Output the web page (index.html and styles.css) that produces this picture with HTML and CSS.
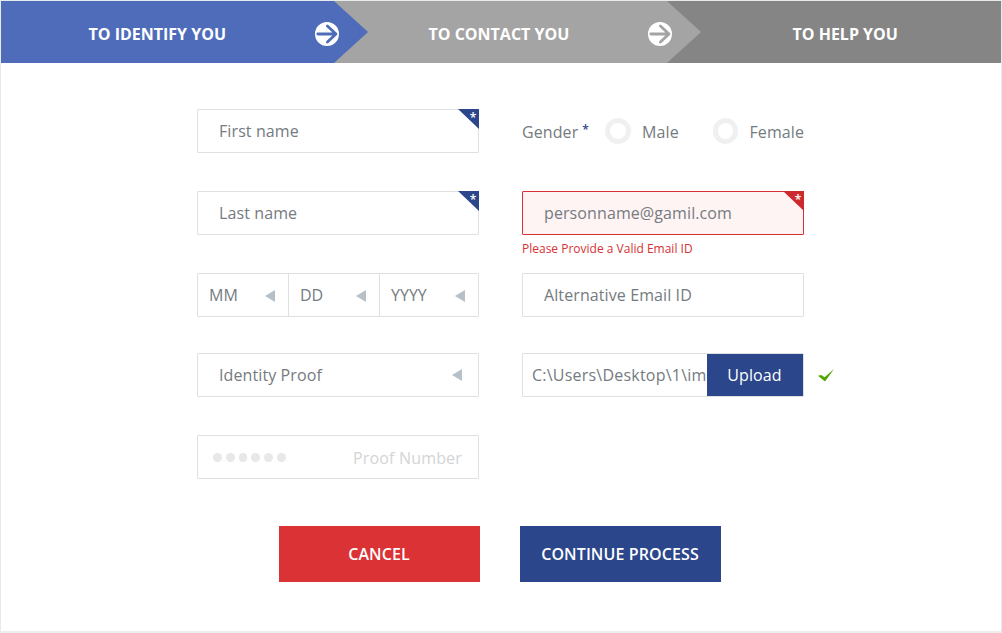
FILE: index.html
```html
<!DOCTYPE html>
<html lang="en">
<head>
<meta charset="utf-8">
<title>Registration</title>
<link rel="stylesheet" href="styles.css">
</head>
<body>
<main class="page">
  <nav class="steps">
    <div class="step step-identify"><span class="step-label">TO IDENTIFY YOU</span>
      <svg class="step-icon" viewBox="0 0 24 24"><circle cx="12" cy="12" r="12"/><path d="M2.8 12H20.5M12.4 4L21 12L12.4 20"/></svg>
    </div>
    <div class="step step-contact"><span class="step-label">TO CONTACT YOU</span>
      <svg class="step-icon" viewBox="0 0 24 24"><circle cx="12" cy="12" r="12"/><path d="M2.8 12H20.5M12.4 4L21 12L12.4 20"/></svg>
    </div>
    <div class="step step-help"><span class="step-label">TO HELP YOU</span></div>
  </nav>
  <form class="form">
    <div class="field"><span class="value">First name</span><span class="corner"><span class="star">*</span></span></div>
    <div class="gender">
      <span class="gender-label">Gender</span><span class="required">*</span>
      <span class="radio"></span><span class="male">Male</span>
      <span class="radio"></span><span class="female">Female</span>
    </div>
    <div class="field"><span class="value">Last name</span><span class="corner"><span class="star">*</span></span></div>
    <div class="cell">
      <div class="field invalid"><span class="value">personname@gamil.com</span><span class="corner"><span class="star">*</span></span></div>
      <div class="error">Please Provide a Valid Email ID</div>
    </div>
    <div class="field date">
      <div class="part"><span>MM</span><span class="caret"></span></div>
      <div class="part"><span>DD</span><span class="caret"></span></div>
      <div class="part year"><span>YYYY</span><span class="caret"></span></div>
    </div>
    <div class="field"><span class="value">Alternative Email ID</span></div>
    <div class="field select"><span class="value">Identity Proof</span><span class="caret"></span></div>
    <div class="upload-row">
      <div class="field upload"><span class="path">C:\Users\Desktop\1\ima</span><span class="upload-button">Upload</span></div>
      <svg class="check" viewBox="0 0 16 13"><path d="M0 6.8L3.2 5.9L6.6 8.3L16 0L7 12.6Z"/></svg>
    </div>
    <div class="field proof">
      <span class="dots"><i></i><i></i><i></i><i></i><i></i><i></i></span>
      <span class="proof-label">Proof Number</span>
    </div>
  </form>
  <div class="actions">
    <div class="button cancel">CANCEL</div>
    <div class="button continue">CONTINUE PROCESS</div>
  </div>
</main>
</body>
</html>
```
FILE: styles.css
```css
* { box-sizing: border-box; }
body {
  margin: 0;
  background: #fff;
  color: #757b80;
  font: 16px/22px "Open Sans", sans-serif;
  letter-spacing: 0.1px;
}
.page {
  height: 633px;
  border: 1px solid #e6eaec;
  border-bottom: 2px solid #ededed;
  overflow: hidden;
}
.steps {
  display: grid;
  grid-template-columns: 333px 333px 1fr;
  height: 62px;
}
.step {
  display: flex;
  align-items: center;
  justify-content: space-between;
  height: 62px;
  padding-top: 4px;
  color: #fff;
  font-weight: 700;
  letter-spacing: 0;
  white-space: nowrap;
}
.step-identify {
  z-index: 2;
  width: 367px;
  padding-left: 87.5px;
  padding-right: 29px;
  background: #4f6cba;
  clip-path: polygon(0 0, 333px 0, 100% 50%, 333px 100%, 0 100%);
}
.step-contact {
  z-index: 1;
  width: 367px;
  padding-left: 94.5px;
  padding-right: 29px;
  background: #a4a4a4;
  clip-path: polygon(0 0, 333px 0, 100% 50%, 333px 100%, 0 100%);
}
.step-help { padding-left: 125.5px; background: #858585; }
.step-icon { width: 24px; height: 24px; fill: #fff; stroke-width: 2.8; stroke-linecap: round; stroke-linejoin: round; }
.step-identify path { fill: none; stroke: #4f6cba; }
.step-contact path { fill: none; stroke: #a4a4a4; }
.form {
  display: grid;
  grid-template-columns: 282px 282px;
  grid-template-rows: 82px 82px 80px 82px 44px;
  column-gap: 43px;
  padding: 46px 0 0 196px;
}
.field {
  display: flex;
  position: relative;
  align-items: center;
  width: 282px;
  height: 44px;
  border: 1px solid #dfe0e1;
  border-radius: 1px;
}
.value { padding-left: 21px; }
.corner {
  position: absolute;
  top: -1px;
  right: -1px;
  width: 21px;
  height: 20px;
  background: #2b468b;
  clip-path: polygon(0 0, 100% 0, 100% 100%);
}
.star {
  position: absolute;
  top: 1px;
  right: 2.5px;
  color: #fff;
  font-size: 12px;
  font-weight: 600;
  line-height: 16px;
}
.invalid { border-color: #d93034; background: #fff4f4; }
.invalid .corner { background: #ce2a2e; }
.error { padding-top: 5px; color: #d93034; font-size: 12px; line-height: 17px; letter-spacing: 0; }
.gender { display: flex; align-items: center; height: 44px; padding-top: 1px; white-space: nowrap; }
.required { width: 27px; padding: 0 0 4px 4px; color: #2b468b; font-size: 12px; font-weight: 600; }
.radio { width: 26px; height: 26px; margin-top: -2px; border: 5px solid #f0f0f0; border-radius: 50%; }
.male { width: 71px; margin-left: 11px; }
.female { margin-left: 11px; }
.part {
  display: flex;
  align-items: center;
  justify-content: space-between;
  width: 91px;
  height: 42px;
  padding: 0 13px 0 11px;
  border-right: 1px solid #dfe0e1;
  letter-spacing: 0;
}
.year { width: 98px; border-right: 0; }
.caret {
  width: 10px;
  height: 12px;
  background: #b6c0c9;
  clip-path: polygon(0 50%, 100% 0, 100% 100%);
}
.part .caret { margin-top: 2px; }
.select { justify-content: space-between; padding-right: 16px; }
.upload-row { display: flex; align-items: center; height: 44px; width: 312px; }
.path {
  width: 184px;
  padding-left: 9px;
  overflow: hidden;
  white-space: nowrap;
  letter-spacing: 0.22px;
}
.upload-button { width: 96px; padding-right: 1px; background: #2b468b; color: #fff; text-align: center; line-height: 42px; }
.check { width: 16px; height: 13px; margin-left: 14px; fill: #4fa600; }
.proof { justify-content: space-between; padding: 2px 16px 0 15px; color: #d3d5d6; }
.proof-label { letter-spacing: 0.18px; }
.dots { display: flex; gap: 4px; margin-top: -1px; }
.dots i { width: 8.8px; height: 9px; border-radius: 50%; background: #e8e8e8; }
.actions { display: flex; gap: 40px; padding: 47px 0 0 278px; }
.button { width: 201px; height: 56px; padding-right: 1px; color: #fff; font-weight: 600; line-height: 56px; text-align: center; }
.cancel { background: #db3236; }
.continue { background: #2b468b; }
```
